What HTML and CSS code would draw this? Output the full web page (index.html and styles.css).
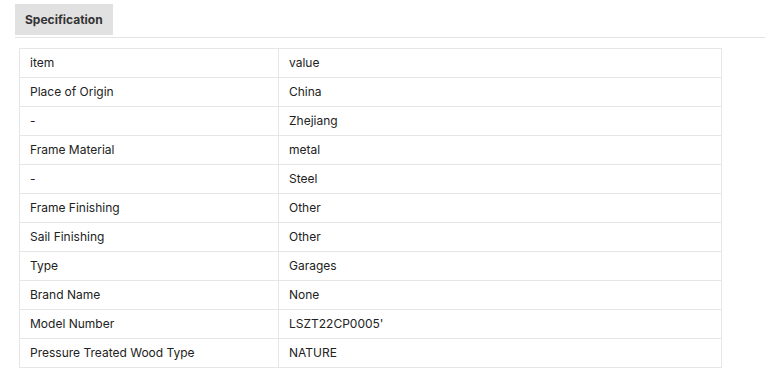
FILE: index.html
```html
<!DOCTYPE html>
<html>
<head>
<meta charset="utf-8">
<link rel="stylesheet" href="styles.css">
</head>
<body>
<div class="spec">
  <div class="tabs"><div class="tab">Specification</div></div>
  <table class="table">
    <tr><td class="k">item</td><td>value</td></tr>
    <tr><td class="k">Place of Origin</td><td>China</td></tr>
    <tr><td class="k">-</td><td>Zhejiang</td></tr>
    <tr><td class="k">Frame Material</td><td>metal</td></tr>
    <tr><td class="k">-</td><td>Steel</td></tr>
    <tr><td class="k">Frame Finishing</td><td>Other</td></tr>
    <tr><td class="k">Sail Finishing</td><td>Other</td></tr>
    <tr><td class="k">Type</td><td>Garages</td></tr>
    <tr><td class="k">Brand Name</td><td>None</td></tr>
    <tr><td class="k">Model Number</td><td>LSZT22CP0005'</td></tr>
    <tr><td class="k">Pressure Treated Wood Type</td><td>NATURE</td></tr>
  </table>
</div>
</body>
</html>
```
FILE: styles.css
```css
html, body { margin: 0; padding: 0; background: #fff; }
body { font-family: Inter, "Noto Sans", sans-serif; color: #222; }
.spec { padding: 4px 15px 0 15px; }
.tabs { border-bottom: 1px solid #e3e3e3; display: flex; }
.tab {
  background: #e1e1e1;
  font-size: 12px;
  font-weight: 700;
  color: #333;
  width: 98px;
  height: 31px;
  line-height: 31px;
  margin-bottom: 2px;
  box-sizing: border-box;
  padding-left: 10px;
}
.table {
  margin: 10px 0 0 4px;
  border-collapse: collapse;
  width: 703px;
  font-size: 12px;
}
.table td {
  border: 1px solid #e6e6e6;
  height: 29px;
  padding: 0 0 2px 10px;
  box-sizing: border-box;
  vertical-align: middle;
}
.table td.k { width: 259px; }
```
